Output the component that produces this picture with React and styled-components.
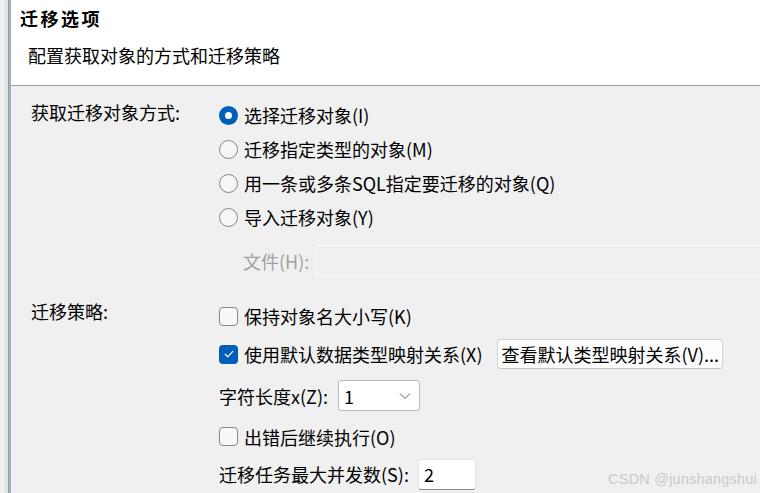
import React from 'react';
import styled, { createGlobalStyle, css } from 'styled-components';

const GlobalStyle = createGlobalStyle`
	html, body {
		margin: 0;
		padding: 0;
	}
	body {
		background: #f0f0f0;
		font-family: "Noto Sans CJK SC", "Noto Sans", sans-serif;
		color: #000;
		overflow: hidden;
	}
`;

const Window = styled.div`
	display: flex;
	width: 760px;
	height: 493px;
	overflow: hidden;
	background: #f0f0f0;
`;

// window edge on the left: light frame, gray line, blue focus strip
const Rail = styled.div`
	flex: 0 0 11px;
	background: linear-gradient(to right,
		#f0f0f0 0 3px, #fbfbfb 3px 4px, #e4e4e4 4px 8px,
		#9a9a9a 8px 9px, #99b4d1 9px 11px);
`;

const Main = styled.div`
	flex: 1;
	min-width: 0;
	display: flex;
	flex-direction: column;
	position: relative;
`;

const Header = styled.header`
	height: 90px;
	box-sizing: border-box;
	background: #fff;
	border-bottom: 1px solid #a0a0a0;
	padding: 6px 0 0 9px;
`;

const Title = styled.h1`
	margin: 0;
	font-size: 18px;
	line-height: 24px;
	font-weight: 700;
	letter-spacing: 2.5px;
`;

const Subtitle = styled.p`
	margin: 13px 0 0 8px;
	font-size: 18px;
	line-height: 24px;
`;

const Body = styled.div`
	flex: 1;
	padding: 12px 0 0 20px;
	font-size: 18px;
`;

const Section = styled.section`
	display: grid;
	grid-template-columns: 188px 1fr;
	margin-top: ${ p => p.$top || 0 }px;
`;

const SectionLabel = styled.div`
	line-height: 28px;
	white-space: nowrap;
`;

const Options = styled.div`
	display: flex;
	flex-direction: column;
	min-width: 0;
`;

const Row = styled.label`
	display: flex;
	align-items: center;
	height: ${ p => p.$h || 34 }px;
	white-space: nowrap;
	line-height: 24px;
`;

const Radio = styled.span`
	flex: 0 0 auto;
	width: 19px;
	height: 19px;
	box-sizing: border-box;
	border-radius: 50%;
	margin-right: 6px;
	display: flex;
	align-items: center;
	justify-content: center;
	${ p => p.$checked ? css`
		background: #005fb8;
		&::after {
			content: '';
			width: 7px;
			height: 7px;
			border-radius: 50%;
			background: #fff;
		}
	` : css`
		background: #f6f6f6;
		border: 1px solid #878787;
	` }
`;

const Box = styled.span`
	flex: 0 0 auto;
	width: 19px;
	height: 19px;
	box-sizing: border-box;
	border-radius: 4px;
	margin-right: 6px;
	display: flex;
	align-items: center;
	justify-content: center;
	${ p => p.$checked ? css`
		background: #005fb8;
	` : css`
		background: #f8f8f8;
		border: 1px solid #878787;
	` }
`;

const FileRow = styled.div`
	display: flex;
	align-items: center;
	height: 32px;
	margin-top: 11px;
	padding-left: 24px;
	white-space: nowrap;
`;

const MutedLabel = styled.span`
	color: #a0a0a0;
	line-height: 24px;
`;

const FileInput = styled.div`
	flex: 0 0 470px;
	height: 32px;
	box-sizing: border-box;
	margin-left: 7px;
	border: 1px solid #fbfbfb;
	border-radius: 2px;
	background: #f0f0f0;
`;

const Button = styled.button`
	height: 30px;
	margin-left: 15px;
	padding: 0 3px;
	font: inherit;
	font-size: 18px;
	line-height: 24px;
	color: #000;
	background: #fdfdfd;
	border: 1px solid #d3d3d3;
	border-bottom-color: #c2c2c2;
	border-radius: 4px;
	white-space: nowrap;
`;

const Select = styled.div`
	width: 82px;
	height: 31px;
	box-sizing: border-box;
	margin-left: 10px;
	padding: 0 8px 0 5px;
	display: flex;
	align-items: center;
	justify-content: space-between;
	background: #fff;
	border: 1px solid #b9b9b9;
	border-radius: 3px;
`;

const TextBox = styled.div`
	width: 58px;
	height: 31px;
	box-sizing: border-box;
	margin-left: 9px;
	padding-left: 5px;
	display: flex;
	align-items: center;
	background: #fff;
	border: 1px solid #e6e6e6;
	border-bottom: 1px solid #8a8a8a;
	border-radius: 3px;
`;

const Watermark = styled.div`
	position: absolute;
	right: 3px;
	bottom: 6px;
	font-family: "Liberation Sans", Arial, sans-serif;
	font-size: 14.5px;
	color: #cacaca;
	letter-spacing: 0.2px;
`;

const Check = () => (
	<svg width="12" height="12" viewBox="0 0 12 12">
		<polyline points="2.2,6.3 4.8,8.8 9.8,3.4" fill="none" stroke="#fff" strokeWidth="1.2" strokeLinecap="round" strokeLinejoin="round" />
	</svg>
);

const Chevron = () => (
	<svg width="12" height="8" viewBox="0 0 12 8">
		<polyline points="1,1.5 6,6.5 11,1.5" fill="none" stroke="#5c5c5c" strokeWidth="1" />
	</svg>
);

const sources = [
	{ text: '选择迁移对象(I)', checked: true },
	{ text: '迁移指定类型的对象(M)' },
	{ text: '用一条或多条SQL指定要迁移的对象(Q)' },
	{ text: '导入迁移对象(Y)' },
];

export default function App() {
	return (
		<Window>
			<GlobalStyle />
			<Rail />
			<Main>
				<Header>
					<Title>迁移选项</Title>
					<Subtitle>配置获取对象的方式和迁移策略</Subtitle>
				</Header>
				<Body>
					<Section>
						<SectionLabel>获取迁移对象方式:</SectionLabel>
						<Options>
							{ sources.map(s => (
								<Row key={ s.text }>
									<Radio $checked={ s.checked } />
									{ s.text }
								</Row>
							)) }
							<FileRow>
								<MutedLabel>文件(H):</MutedLabel>
								<FileInput />
							</FileRow>
						</Options>
					</Section>
					<Section $top={ 20 }>
						<SectionLabel>迁移策略:</SectionLabel>
						<Options>
							<Row $h={ 38 }>
								<Box />
								保持对象名大小写(K)
							</Row>
							<Row $h={ 38 }>
								<Box $checked><Check /></Box>
								使用默认数据类型映射关系(X)
								<Button>查看默认类型映射关系(V)...</Button>
							</Row>
							<Row $h={ 45 }>
								字符长度x(Z):
								<Select>
									<span>1</span>
									<Chevron />
								</Select>
							</Row>
							<Row $h={ 37 }>
								<Box />
								出错后继续执行(O)
							</Row>
							<Row $h={ 38 }>
								迁移任务最大并发数(S):
								<TextBox>2</TextBox>
							</Row>
						</Options>
					</Section>
				</Body>
				<Watermark>CSDN @junshangshui</Watermark>
			</Main>
		</Window>
	);
}
